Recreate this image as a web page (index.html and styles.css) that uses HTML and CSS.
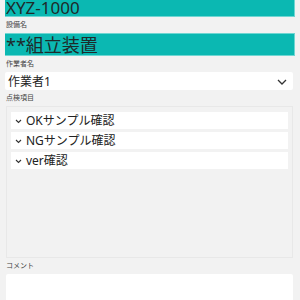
FILE: index.html
```html
<!DOCTYPE html>
<html lang="ja">
<head>
  <meta charset="UTF-8">
  <meta name="viewport" content="width=device-width, initial-scale=1.0">
  <title>点検入力</title>
  <link rel="stylesheet" href="styles.css">
</head>
<body>
  <div class="form">
    <div class="banner banner-code">XYZ-1000</div>

    <div class="label">設備名</div>
    <div class="banner banner-name">**組立装置</div>

    <div class="label">作業者名</div>
    <div class="select">
      <span>作業者1</span>
      <svg class="select-arrow" width="10" height="6" viewBox="0 0 10 6">
        <path d="M1 1 L5 5 L9 1" fill="none" stroke="#333" stroke-width="1.3"/>
      </svg>
    </div>

    <div class="label">点検項目</div>
    <div class="check-group">
      <div class="check-item">
        <svg class="chev" width="7" height="5" viewBox="0 0 7 5"><path d="M1 1 L3.5 3.5 L6 1" fill="none" stroke="#333" stroke-width="1.1"/></svg>
        OKサンプル確認
      </div>
      <div class="check-item">
        <svg class="chev" width="7" height="5" viewBox="0 0 7 5"><path d="M1 1 L3.5 3.5 L6 1" fill="none" stroke="#333" stroke-width="1.1"/></svg>
        NGサンプル確認
      </div>
      <div class="check-item">
        <svg class="chev" width="7" height="5" viewBox="0 0 7 5"><path d="M1 1 L3.5 3.5 L6 1" fill="none" stroke="#333" stroke-width="1.1"/></svg>
        ver確認
      </div>
    </div>

    <div class="label">コメント</div>
    <div class="comment"></div>
  </div>
</body>
</html>
```
FILE: styles.css
```css
body {
  margin: 0;
  background: #f2f2f2;
  font-family: "Noto Sans", "Noto Sans CJK JP", sans-serif;
  color: #222;
}
.form {
  display: flex;
  flex-direction: column;
  padding: 0 5px;
}
.banner {
  background: #0bb8b2;
  border-right: 1px solid #6fd6d2;
  border-bottom: 1px solid #6fd6d2;
  color: #1e2a2a;
  padding-left: 1px;
}
.banner-code {
  height: 16px;
  font-size: 17px;
  line-height: 16px;
}
.banner-name {
  height: 21px;
  font-size: 18px;
  line-height: 23px;
  border-top: 1px solid #6fd6d2;
}
.label {
  height: 16px;
  font-size: 7px;
  line-height: 16px;
  color: #444;
  padding-left: 1px;
}
.select {
  height: 18px;
  margin-right: 2px;
  background: #fff;
  border-radius: 2px;
  display: flex;
  align-items: center;
  justify-content: space-between;
  padding: 0 6px 0 3px;
  font-size: 12px;
}
.select-arrow {
  margin-top: 1px;
}
.check-group {
  height: 145px;
  margin: 0 2px 0 1px;
  border: 1px solid #e8e8e8;
  padding: 5px 4px 0 4px;
  display: flex;
  flex-direction: column;
  gap: 3px;
}
.check-item {
  height: 17px;
  background: #fff;
  font-size: 12px;
  line-height: 17px;
  display: flex;
  align-items: center;
}
.chev {
  margin: 1px 4px 0 4px;
}
.comment {
  height: 40px;
  margin: 0 2px 0 1px;
  background: #fff;
  border-radius: 2px;
}
```
